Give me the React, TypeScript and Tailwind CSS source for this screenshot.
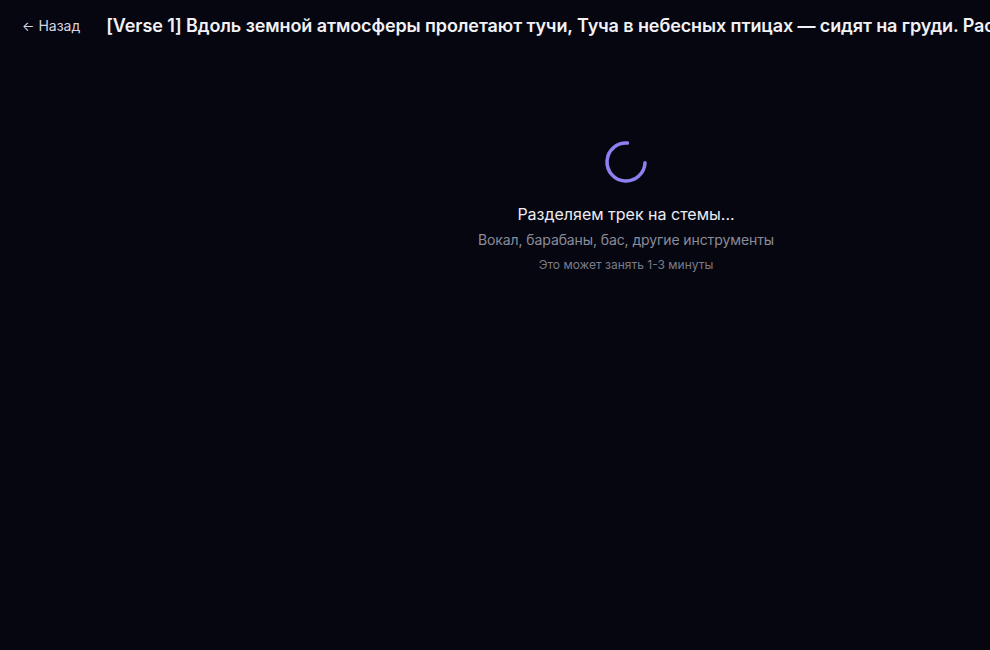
import React from "react";

export default function App() {
  return (
    <div
      className="min-h-[650px] w-[1252px] bg-[#05060f] text-white"
      style={{ fontFamily: "Inter, 'Noto Sans', sans-serif" }}
    >
      <header className="flex items-center gap-[26px] pl-[22px] pr-6 h-[52px] whitespace-nowrap">
        <button className="flex items-center gap-1 text-sm text-[#d4d5e0]">
          <span className="text-[13px]">←</span>
          <span>Назад</span>
        </button>
        <h1 className="text-lg font-semibold tracking-[-0.1px] text-[#f1f1f6]">
          [Verse 1] Вдоль земной атмосферы пролетают тучи, Туча в небесных птицах — сидят на груди. Расправляя крылья
        </h1>
      </header>
      <main className="flex flex-col items-center pt-[88px]">
        <svg width="44" height="44" viewBox="0 0 44 44">
          <path
            d="M 23.5 3.06 A 19 19 0 1 0 41 22.8"
            fill="none"
            stroke="#8d80f0"
            strokeWidth="3.5"
            strokeLinecap="round"
          />
        </svg>
        <p className="mt-[18px] text-base text-[#ececf3]">Разделяем трек на стемы...</p>
        <p className="mt-[4px] text-sm tracking-[-0.1px] text-[#8b8c9b]">Вокал, барабаны, бас, другие инструменты</p>
        <p className="mt-[7px] text-xs text-[#7b7c8b]">Это может занять 1-3 минуты</p>
      </main>
    </div>
  );
}
